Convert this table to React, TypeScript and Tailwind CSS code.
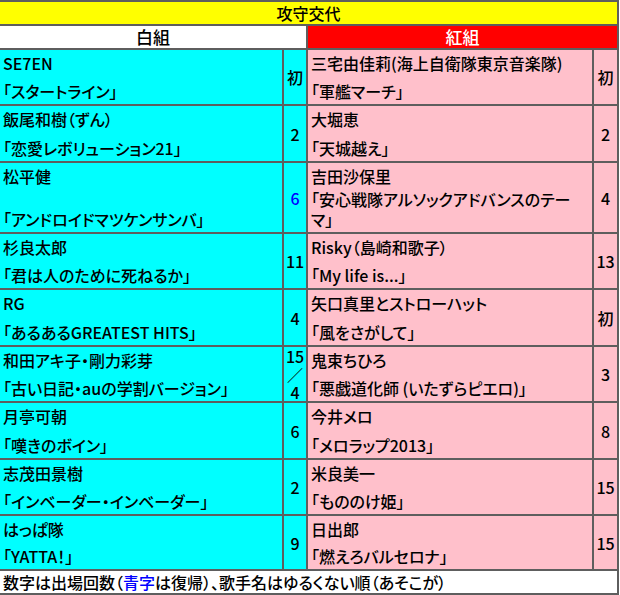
import React from 'react';

type Side = { name: string; song: string; count: string; blue?: boolean };
type Row = { h: string; left: Side; right: Side };

const rows: Row[] = [
  {
    h: 'h-[54px]',
    left: { name: 'SE7EN', song: '「スタートライン」', count: '初' },
    right: { name: '三宅由佳莉(海上自衛隊東京音楽隊)', song: '「軍艦マーチ」', count: '初' },
  },
  {
    h: 'h-[55px]',
    left: { name: '飯尾和樹（ずん）', song: '「恋愛レボリューション21」', count: '2' },
    right: { name: '大堀恵', song: '「天城越え」', count: '2' },
  },
  {
    h: 'h-[69px]',
    left: { name: '松平健', song: '「アンドロイドマツケンサンバ」', count: '6', blue: true },
    right: { name: '吉田沙保里', song: '「安心戦隊アルソックアドバンスのテーマ」', count: '4' },
  },
  {
    h: 'h-[54px]',
    left: { name: '杉良太郎', song: '「君は人のために死ねるか」', count: '11' },
    right: { name: 'Risky（島崎和歌子）', song: '「My life is...」', count: '13' },
  },
  {
    h: 'h-[55px]',
    left: { name: 'RG', song: '「あるあるGREATEST HITS」', count: '4' },
    right: { name: '矢口真里とストローハット', song: '「風をさがして」', count: '初' },
  },
  {
    h: 'h-[54px]',
    left: { name: '和田アキ子・剛力彩芽', song: '「古い日記・auの学割バージョン」', count: '15／4' },
    right: { name: '鬼束ちひろ', song: '「悪戯道化師 (いたずらピエロ)」', count: '3' },
  },
  {
    h: 'h-[55px]',
    left: { name: '月亭可朝', song: '「嘆きのボイン」', count: '6' },
    right: { name: '今井メロ', song: '「メロラップ2013」', count: '8' },
  },
  {
    h: 'h-[54px]',
    left: { name: '志茂田景樹', song: '「インベーダー・インベーダー」', count: '2' },
    right: { name: '米良美一', song: '「もののけ姫」', count: '15' },
  },
  {
    h: 'h-[53px]',
    left: { name: 'はっぱ隊', song: '「YATTA！」', count: '9' },
    right: { name: '日出郎', song: '「燃えろバルセロナ」', count: '15' },
  },
];

function NameCell({ side, bg, h }: { side: Side; bg: string; h: string }) {
  return (
    <div className={`${bg} ${h} flex flex-col justify-between px-[3px] py-[3px]`}>
      <div>{side.name}</div>
      <div>{side.song}</div>
    </div>
  );
}

function CountCell({ side, bg, h }: { side: Side; bg: string; h: string }) {
  if (side.count === '15／4') {
    return (
      <div className={`${bg} ${h} flex flex-col items-center justify-center leading-[18px]`}>
        <span>15</span>
        <span>／</span>
        <span>4</span>
      </div>
    );
  }
  return (
    <div className={`${bg} ${h} flex items-center justify-center ${side.blue ? 'text-[#0000ff]' : ''}`}>
      {side.count}
    </div>
  );
}

export default function App() {
  return (
    <div className="bg-white w-[620px] h-[595px] font-['Noto_Sans_CJK_JP',sans-serif] text-[16px] font-medium leading-[20px] text-black [font-feature-settings:'palt']">
      <div className="grid w-[619px] grid-cols-[282px_22px_284px_23px] gap-[2px] bg-[#5e5e5e] py-[2px] pr-[2px]">
        <div className="col-span-4 flex h-[22px] items-center justify-center bg-[#ffff00]">攻守交代</div>
        <div className="col-span-2 flex h-[22px] items-center justify-center bg-white text-[17px]">白組</div>
        <div className="col-span-2 flex h-[22px] items-center justify-center bg-[#ff0000] text-[17px] text-white">紅組</div>
        {rows.map((r, i) => (
          <React.Fragment key={i}>
            <NameCell side={r.left} bg="bg-[#00ffff]" h={r.h} />
            <CountCell side={r.left} bg="bg-[#00ffff]" h={r.h} />
            <NameCell side={r.right} bg="bg-[#ffc0cb]" h={r.h} />
            <CountCell side={r.right} bg="bg-[#ffc0cb]" h={r.h} />
          </React.Fragment>
        ))}
        <div className="col-span-4 flex h-[22px] items-center bg-white px-[3px]">
          数字は出場回数（<span className="text-[#0000ff]">青字</span>は復帰）、歌手名はゆるくない順（あそこが）
        </div>
      </div>
    </div>
  );
}
